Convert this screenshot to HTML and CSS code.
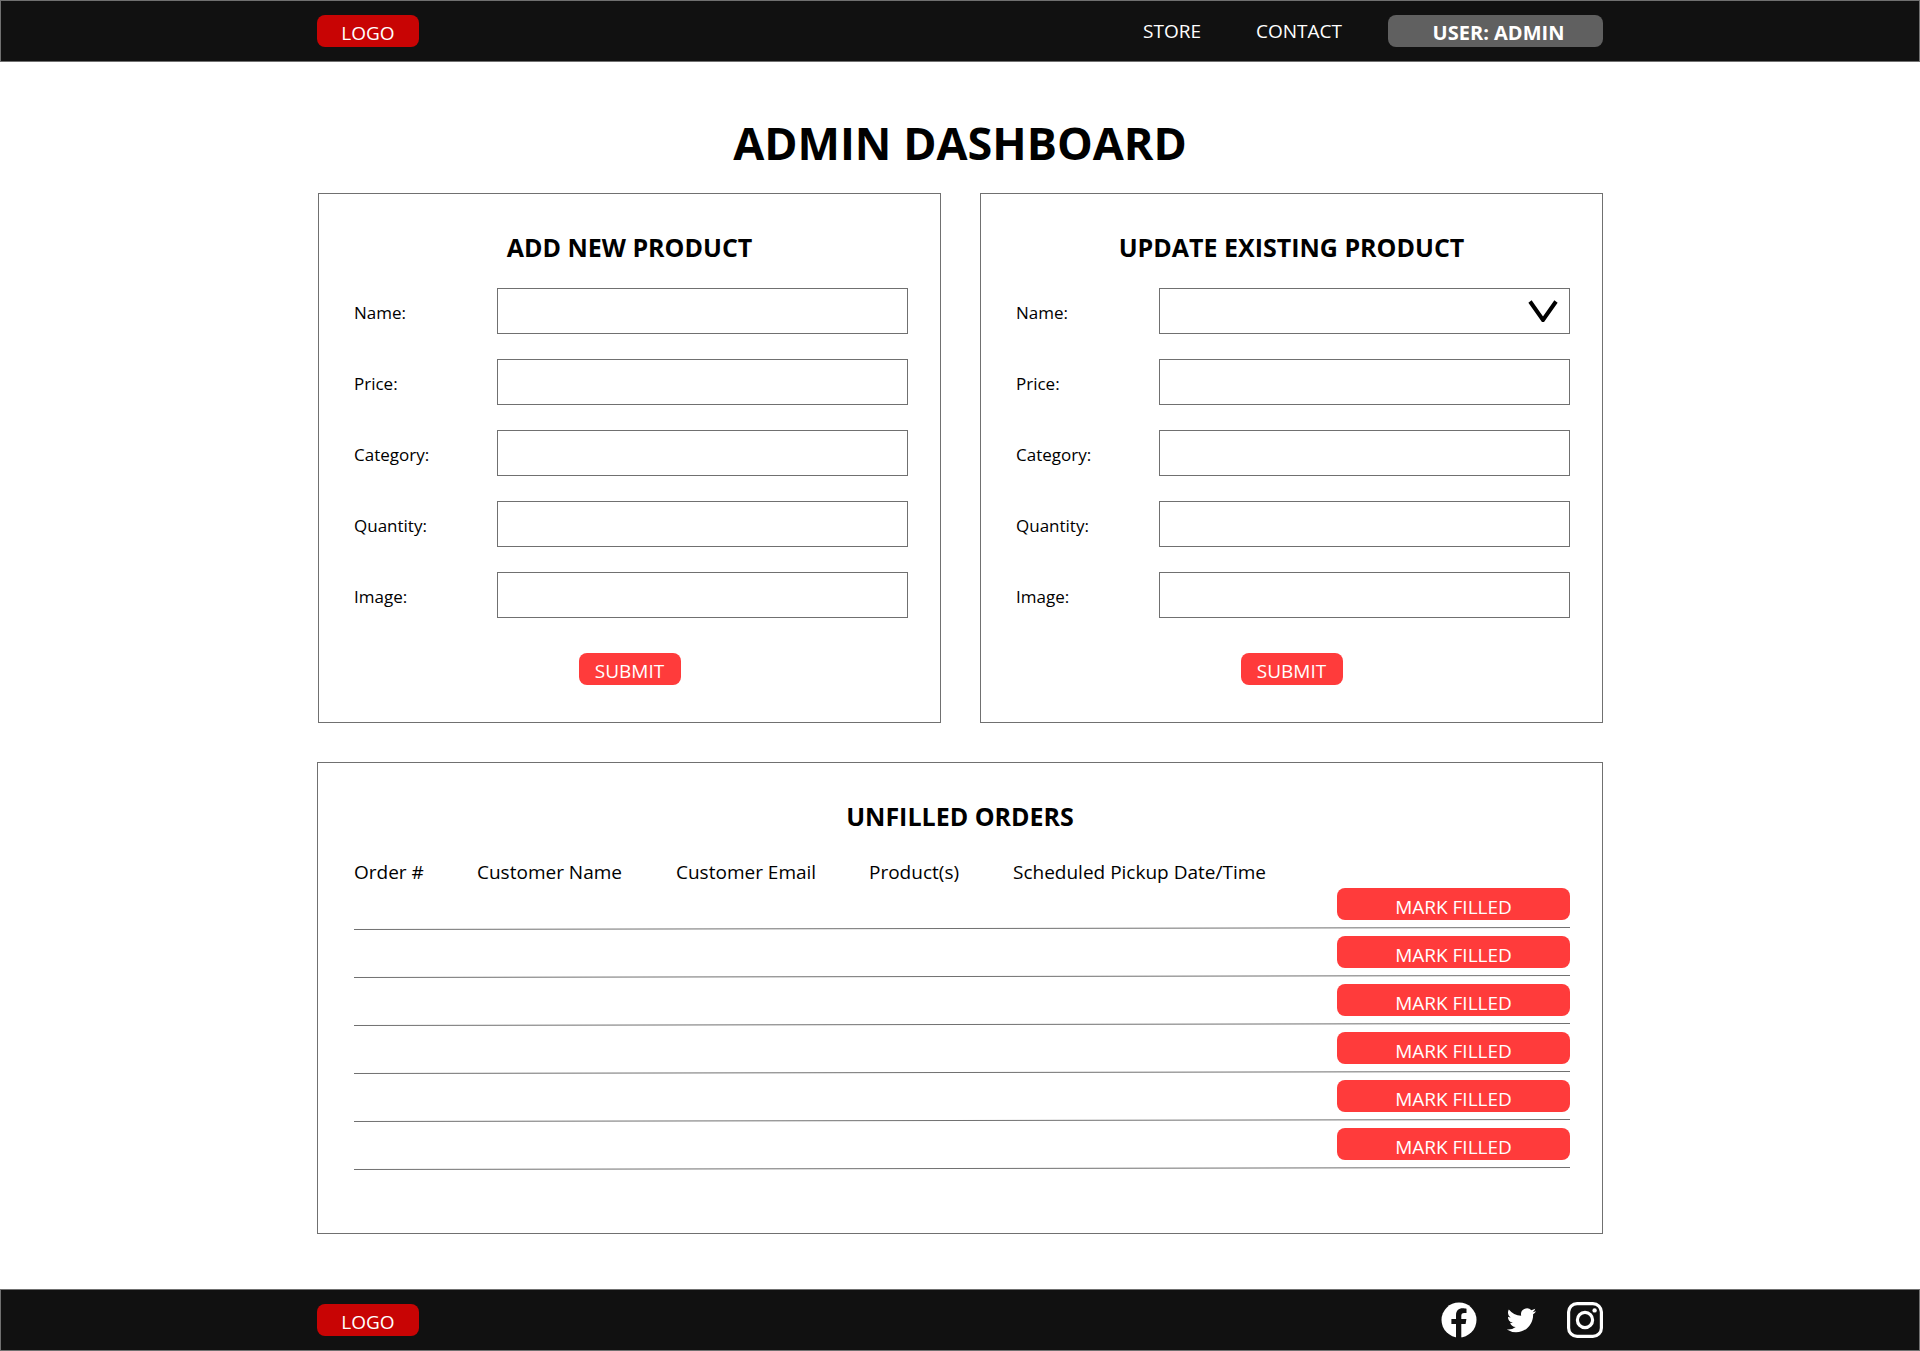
FILE: index.html
```html
<!DOCTYPE html>
<html lang="en">
<head>
<meta charset="utf-8">
<meta name="viewport" content="width=device-width, initial-scale=1">
<title>Admin Dashboard</title>
<link rel="stylesheet" href="styles.css">
</head>
<body>
<header class="bar">
  <div class="container bar-inner">
    <a class="logo" href="#">LOGO</a>
    <nav class="nav">
      <a class="nav-link" href="#">STORE</a>
      <a class="nav-link" href="#">CONTACT</a>
      <button class="user" type="button">USER: ADMIN</button>
    </nav>
  </div>
</header>

<main class="container main">
  <h1 class="title">ADMIN DASHBOARD</h1>

  <div class="panels">
    <form class="panel">
      <h2 class="panel-title">ADD NEW PRODUCT</h2>
      <div class="fields">
        <label class="label" for="new-name">Name:</label>
        <input class="field" id="new-name" type="text">
        <label class="label" for="new-price">Price:</label>
        <input class="field" id="new-price" type="text">
        <label class="label" for="new-category">Category:</label>
        <input class="field" id="new-category" type="text">
        <label class="label" for="new-quantity">Quantity:</label>
        <input class="field" id="new-quantity" type="text">
        <label class="label" for="new-image">Image:</label>
        <input class="field" id="new-image" type="text">
      </div>
      <button class="button submit" type="button">SUBMIT</button>
    </form>

    <form class="panel">
      <h2 class="panel-title">UPDATE EXISTING PRODUCT</h2>
      <div class="fields">
        <label class="label" for="old-name">Name:</label>
        <select class="field select" id="old-name"><option value=""></option></select>
        <label class="label" for="old-price">Price:</label>
        <input class="field" id="old-price" type="text">
        <label class="label" for="old-category">Category:</label>
        <input class="field" id="old-category" type="text">
        <label class="label" for="old-quantity">Quantity:</label>
        <input class="field" id="old-quantity" type="text">
        <label class="label" for="old-image">Image:</label>
        <input class="field" id="old-image" type="text">
      </div>
      <button class="button submit" type="button">SUBMIT</button>
    </form>
  </div>

  <section class="panel orders">
    <h2 class="panel-title orders-title">UNFILLED ORDERS</h2>
    <div class="table-wrap">
      <table class="table">
        <colgroup>
          <col class="col-order"><col class="col-name"><col class="col-email"><col class="col-products"><col><col class="col-action">
        </colgroup>
        <thead>
          <tr><th>Order #</th><th>Customer Name</th><th>Customer Email</th><th>Product(s)</th><th>Scheduled Pickup Date/Time</th><td></td></tr>
        </thead>
        <tbody>
          <tr><td></td><td></td><td></td><td></td><td></td><td><button class="button mark" type="button">MARK FILLED</button></td></tr>
          <tr><td></td><td></td><td></td><td></td><td></td><td><button class="button mark" type="button">MARK FILLED</button></td></tr>
          <tr><td></td><td></td><td></td><td></td><td></td><td><button class="button mark" type="button">MARK FILLED</button></td></tr>
          <tr><td></td><td></td><td></td><td></td><td></td><td><button class="button mark" type="button">MARK FILLED</button></td></tr>
          <tr><td></td><td></td><td></td><td></td><td></td><td><button class="button mark" type="button">MARK FILLED</button></td></tr>
          <tr><td></td><td></td><td></td><td></td><td></td><td><button class="button mark" type="button">MARK FILLED</button></td></tr>
        </tbody>
      </table>
    </div>
  </section>
</main>

<footer class="bar">
  <div class="container bar-inner">
    <a class="logo" href="#">LOGO</a>
    <div class="social">
      <a class="social-link" href="#" aria-label="Facebook">
        <svg width="36" height="36" viewBox="0 0 36 36"><circle cx="18" cy="18" r="17.5" fill="#fff"/><path fill="#111" d="M15 36V22h-4.600v-5H15v-3.800c0-4.500 2.600-6.900 6.700-6.900 1.500 0 3.200.2 3.800.4v4.300h-2.300c-2.200 0-2.900 1.300-2.900 2.800V17h5.100l-.8 5h-4.300v14z"/></svg>
      </a>
      <a class="social-link" href="#" aria-label="Twitter">
        <svg width="36" height="36" viewBox="-2.300 -3 29.500 29.500"><path fill="#fff" d="M23.953 4.570a10 10 0 01-2.825.775 4.958 4.958 0 002.163-2.723c-.951.555-2.005.959-3.127 1.184a4.920 4.920 0 00-8.384 4.482C7.690 8.095 4.067 6.130 1.640 3.162a4.822 4.822 0 00-.666 2.475c0 1.710.870 3.213 2.188 4.096a4.904 4.904 0 01-2.228-.616v.060a4.923 4.923 0 003.946 4.827 4.996 4.996 0 01-2.212.085 4.936 4.936 0 004.604 3.417 9.867 9.867 0 01-6.102 2.105c-.390 0-.779-.023-1.170-.067a13.995 13.995 0 007.557 2.209c9.053 0 13.998-7.496 13.998-13.985 0-.210 0-.420-.015-.630A9.935 9.935 0 0024 4.590z"/></svg>
      </a>
      <a class="social-link" href="#" aria-label="Instagram">
        <svg width="36" height="36" viewBox="0 0 36 36" fill="none" stroke="#fff" stroke-width="3.200"><rect x="1.600" y="1.600" width="32.800" height="32.800" rx="8.500"/><circle cx="18" cy="18" r="7.600"/><circle cx="27.600" cy="8.400" r="2.200" fill="#fff" stroke="none"/></svg>
      </a>
    </div>
  </div>
</footer>
</body>
</html>
```

FILE: styles.css
```css
* {
  box-sizing: border-box;
}

body {
  margin: 0;
  background: #fff;
  color: #000;
  font-family: "Segoe UI", "Open Sans", "Noto Sans", sans-serif;
  font-size: 19px;
}

button,
input,
select {
  font: inherit;
}

a {
  color: inherit;
  text-decoration: none;
}

.container {
  width: 100%;
  max-width: 1286px;
  margin: 0 auto;
}

/* Header and footer bars */
.bar {
  background: #111;
  border: 1px solid #707070;
  color: #fff;
}

.bar-inner {
  display: flex;
  align-items: center;
  justify-content: space-between;
  height: 60px;
}

.logo,
.user,
.button {
  display: block;
  height: 32px;
  padding: 4px 0 0;
  border: 0;
  border-radius: 8px;
  color: #fff;
  line-height: 28px;
  text-align: center;
}

.logo {
  width: 102px;
  background: #c80404;
}

.nav {
  display: flex;
  align-items: center;
}

.nav-link {
  margin-right: 55px;
  line-height: 28px;
}

.nav-link:nth-child(2) {
  margin-right: 46px;
}

.user {
  width: 215px;
  padding-left: 6px;
  background: #606060;
  font-size: 20px;
  font-weight: 700;
}

.social {
  display: flex;
  gap: 27px;
}

.social-link,
.social-link svg {
  display: block;
}

/* Page content */
.main {
  padding: 53px 0 55px;
}

.title {
  margin: 0 0 22px;
  font-size: 45px;
  line-height: 56px;
  text-align: center;
}

.panels {
  display: grid;
  grid-template-columns: 1fr 1fr;
  gap: 39px;
  margin-bottom: 39px;
  padding-left: 1px;
}

.panel {
  padding: 37px 0;
  border: 1px solid #707070;
}

.panel-title {
  margin: 0 0 25px;
  font-size: 25px;
  line-height: 32px;
  text-align: center;
}

.fields {
  display: grid;
  grid-template-columns: 143px 1fr;
  row-gap: 25px;
  margin: 0 32px 35px 35px;
}

.label {
  padding-top: 4px;
  font-size: 17px;
  line-height: 42px;
}

.field {
  width: 100%;
  height: 46px;
  padding: 0 12px;
  border: 1px solid #707070;
  border-radius: 0;
  background: #fff;
}

.select {
  appearance: none;
  background: #fff url("data:image/svg+xml,%3Csvg xmlns='http://www.w3.org/2000/svg' width='30' height='22'%3E%3Cpath d='M2 1.500L15 20L28 1.500' fill='none' stroke='%23000' stroke-width='4'/%3E%3C/svg%3E") no-repeat right 11px center;
}

.button {
  background: #ff3b3b;
}

.submit {
  width: 102px;
  margin: 0 auto;
}

/* Orders */
.orders {
  padding-bottom: 63px;
}

.orders-title {
  margin-bottom: 28px;
}

.table-wrap {
  margin: 0 32px 0 36px;
}

.table {
  width: 100%;
  table-layout: fixed;
  border-collapse: collapse;
}

.col-order {
  width: 123px;
}

.col-name {
  width: 199px;
}

.col-email {
  width: 193px;
}

.col-products {
  width: 144px;
}

.col-action {
  width: 233px;
}

.table th {
  padding: 2px 0 0;
  font-weight: 400;
  line-height: 20px;
  text-align: left;
  white-space: nowrap;
}

.table td {
  padding: 0;
}

/* Row rules rise slightly from left to right */
.table tbody tr {
  height: 48px;
  background: url("data:image/svg+xml,%3Csvg xmlns='http://www.w3.org/2000/svg' viewBox='0 0 1216 3' preserveAspectRatio='none'%3E%3Cpath d='M0 2.500L1216 .5' stroke='%23707070'/%3E%3C/svg%3E") no-repeat left bottom / 100% 3px;
}

.table tbody td {
  padding: 6px 0 10px;
}

.mark {
  width: 100%;
  padding-top: 6px;
  line-height: 26px;
}
```
